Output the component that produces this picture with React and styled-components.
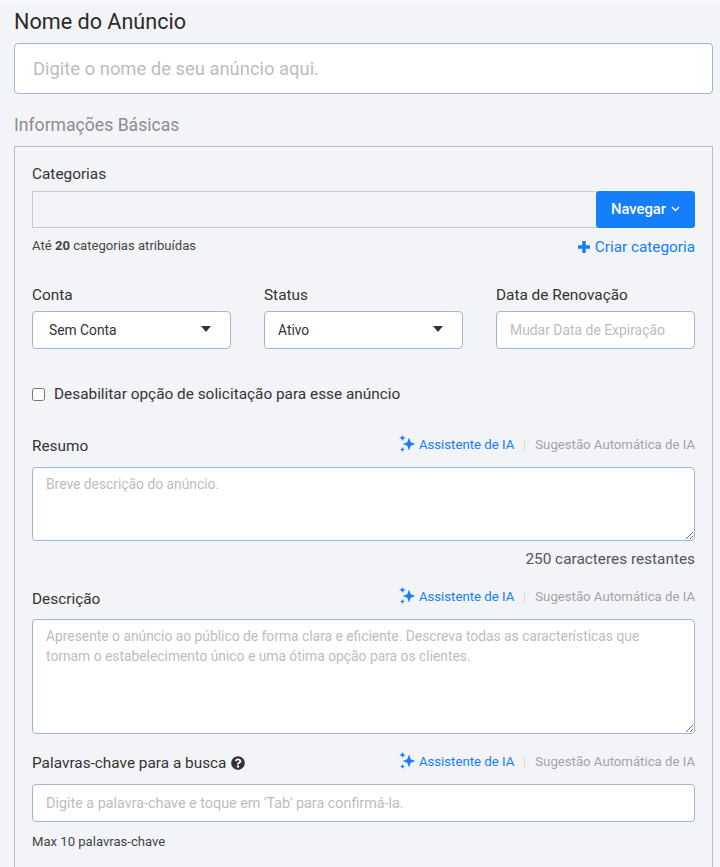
import React from 'react';
import styled, { createGlobalStyle } from 'styled-components';
import { FaQuestionCircle } from 'react-icons/fa';

const GlobalStyle = createGlobalStyle`
  html, body {
    margin: 0;
    padding: 0;
    background: #f3f4f8;
    font-family: Roboto, "Liberation Sans", sans-serif;
    color: #333;
  }
  * { box-sizing: border-box; }
`;

const Sparkles = () => (
  <SparkIcon viewBox="0 0 17 18" aria-hidden="true">
    <path d="M10 2.6l1.7 4.6 4.7 1.8-4.7 1.8-1.7 4.6-1.7-4.6-4.7-1.8 4.7-1.8z" />
    <path d="M3.5 0l.9 2.1 2.1.9-2.1.9-.9 2.1-.9-2.1-2.1-.9 2.1-.9z" />
    <path d="M3.5 12l.7 1.8 1.8.7-1.8.7-.7 1.8-.7-1.8-1.8-.7 1.8-.7z" />
  </SparkIcon>
);

const AiTools = ({ lift }) => (
  <Tools $lift={lift}>
    <AiLink>
      <Sparkles />
      Assistente de IA
    </AiLink>
    <Divider />
    <AiMuted>Sugestão Automática de IA</AiMuted>
  </Tools>
);

const App = () => {
  return (
    <>
      <GlobalStyle />
      <Page>
        <Title>Nome do Anúncio</Title>
        <NameInput placeholder="Digite o nome de seu anúncio aqui." />
        <SectionTitle>Informações Básicas</SectionTitle>
        <Panel>
          <Label>Categorias</Label>
          <CategoryRow>
            <CategoryField />
            <BrowseButton>
              Navegar
              <svg width="9" height="6" viewBox="0 0 9 6" fill="none" stroke="#fff" strokeWidth="1.4">
                <path d="M1 1l3.5 3.5L8 1" />
              </svg>
            </BrowseButton>
          </CategoryRow>
          <CategoryFoot>
            <Hint $top={1}>
              Até <b>20</b> categorias atribuídas
            </Hint>
            <CreateLink>
              <svg width="12" height="12" viewBox="0 0 12 12" fill="none" stroke="#147efb" strokeWidth="3.4">
                <path d="M6 0v12M0 6h12" />
              </svg>
              Criar categoria
            </CreateLink>
          </CategoryFoot>

          <Columns>
            <div>
              <ColumnLabel>Conta</ColumnLabel>
              <Select $pad={16}>
                Sem Conta
                <Caret />
              </Select>
            </div>
            <div>
              <ColumnLabel>Status</ColumnLabel>
              <Select $pad={13}>
                Ativo
                <Caret />
              </Select>
            </div>
            <div>
              <ColumnLabel>Data de Renovação</ColumnLabel>
              <TextInput $size={13.9} placeholder="Mudar Data de Expiração" />
            </div>
          </Columns>

          <CheckRow>
            <input type="checkbox" />
            Desabilitar opção de solicitação para esse anúncio
          </CheckRow>

          <FieldHead $top={32} $gap={11}>
            <Label>Resumo</Label>
            <AiTools lift={1} />
          </FieldHead>
          <TextArea $height={74} placeholder="Breve descrição do anúncio." />
          <Remaining>250 caracteres restantes</Remaining>

          <FieldHead $top={21} $gap={10}>
            <Label>Descrição</Label>
            <AiTools lift={2} />
          </FieldHead>
          <TextArea
            $height={115}
            placeholder="Apresente o anúncio ao público de forma clara e eficiente. Descreva todas as características que tornam o estabelecimento único e uma ótima opção para os clientes."
          />

          <FieldHead $top={19} $gap={11}>
            <Label>
              Palavras-chave para a busca <FaQuestionCircle size={14} />
            </Label>
            <AiTools lift={1} />
          </FieldHead>
          <TextInput $size={14.35} placeholder="Digite a palavra-chave e toque em 'Tab' para confirmá-la." />
          <Hint $top={11}>Max 10 palavras-chave</Hint>
        </Panel>
      </Page>
    </>
  );
};

const Page = styled.div`
  height: 867px;
  overflow: hidden;
  padding: 9px 7px 0 14px;
  background: linear-gradient(#f8f8fb, #f3f4f8 4px);
`;

const Title = styled.h1`
  margin: 0 0 8px;
  font-size: 21.6px;
  line-height: 26px;
  font-weight: 400;
  color: #2b2b2b;
`;

const NameInput = styled.input`
  display: block;
  width: 100%;
  height: 51px;
  padding: 0 18px;
  background: #fff;
  border: 1px solid #a3b5cf;
  border-radius: 4px;
  font: 400 18.4px Roboto, sans-serif;
  &::placeholder { color: #bdbdbd; opacity: 1; }
`;

const SectionTitle = styled.h2`
  margin: 20px 0 10px;
  font-size: 17.6px;
  line-height: 22px;
  font-weight: 400;
  color: #8c8c8c;
`;

const Panel = styled.section`
  height: 760px;
  padding: 17px 17px 0;
  border: 1px solid #bdbdbd;
`;

const Label = styled.label`
  display: block;
  font-size: 15.36px;
  line-height: 20px;
  color: #333;
  svg { vertical-align: -2px; margin-left: 1px; }
`;

const CategoryRow = styled.div`
  display: flex;
  height: 37px;
  margin-top: 7px;
`;

const CategoryField = styled.div`
  flex: 1;
  border: 1px solid #c9c9c9;
  border-right: 0;
`;

const BrowseButton = styled.button`
  display: flex;
  align-items: center;
  justify-content: center;
  gap: 5px;
  width: 99px;
  padding: 0 0 2px;
  border: 0;
  border-radius: 3px;
  background: #147efb;
  color: #fff;
  font: 500 14.8px Roboto, sans-serif;
`;

const CategoryFoot = styled.div`
  display: flex;
  justify-content: space-between;
  align-items: flex-start;
  height: 20px;
  margin-top: 8px;
`;

const Hint = styled.p`
  margin: ${(p) => p.$top || 0}px 0 0;
  font-size: 13.1px;
  line-height: 18px;
  color: #444;
  b { font-weight: 700; }
`;

const CreateLink = styled.a`
  display: flex;
  align-items: center;
  gap: 5px;
  margin-top: 1px;
  font-size: 15.3px;
  line-height: 20px;
  color: #147efb;
`;

const Columns = styled.div`
  display: grid;
  grid-template-columns: repeat(3, 1fr);
  column-gap: 33px;
  margin-top: 29px;
`;

const ColumnLabel = styled(Label)`
  margin-bottom: 6px;
`;

const Select = styled.div`
  display: flex;
  align-items: center;
  justify-content: space-between;
  height: 38px;
  padding: 0 19px 0 ${(p) => p.$pad}px;
  background: #fff;
  border: 1px solid #a3b5cf;
  border-radius: 4px;
  font-size: 13.8px;
  color: #333;
`;

const Caret = styled.span`
  width: 0;
  height: 0;
  margin-top: -2px;
  border-left: 5.5px solid transparent;
  border-right: 5.5px solid transparent;
  border-top: 6px solid #333;
`;

const TextInput = styled.input`
  display: block;
  width: 100%;
  height: 38px;
  padding: 0 13px;
  background: #fff;
  border: 1px solid #a3b5cf;
  border-radius: 4px;
  font: 400 ${(p) => p.$size}px Roboto, sans-serif;
  &::placeholder { color: #bdbdbd; opacity: 1; }
`;

const CheckRow = styled.label`
  display: flex;
  align-items: center;
  gap: 9px;
  margin-top: 35px;
  font-size: 15.36px;
  line-height: 20px;
  color: #333;
  input { width: 13px; height: 13px; margin: 0; }
`;

const FieldHead = styled.div`
  display: flex;
  justify-content: space-between;
  align-items: center;
  height: 20px;
  margin-top: ${(p) => p.$top}px;
  margin-bottom: ${(p) => p.$gap}px;
`;

const Tools = styled.div`
  display: flex;
  align-items: center;
  margin-top: ${(p) => -2 * p.$lift}px;
  font-size: 13.2px;
  line-height: 18px;
`;

const SparkIcon = styled.svg`
  width: 17px;
  height: 18px;
  margin-right: 3px;
  margin-top: -2px;
  fill: #147efb;
`;

const AiLink = styled.a`
  display: flex;
  align-items: center;
  color: #147efb;
`;

const Divider = styled.span`
  width: 1px;
  height: 11px;
  margin: 0 10px;
  background: #dcdcdc;
`;

const AiMuted = styled.span`
  color: #a3a3a3;
`;

const TextArea = styled.textarea`
  display: block;
  width: 100%;
  height: ${(p) => p.$height}px;
  padding: 6px 13px;
  background: #fff;
  border: 1px solid #a3b5cf;
  border-radius: 4px;
  font: 400 13.84px/20px Roboto, sans-serif;
  &::placeholder { color: #bdbdbd; opacity: 1; }
`;

const Remaining = styled.div`
  margin-top: 9px;
  text-align: right;
  font-size: 15.36px;
  line-height: 18px;
  color: #555;
`;

export default App;
